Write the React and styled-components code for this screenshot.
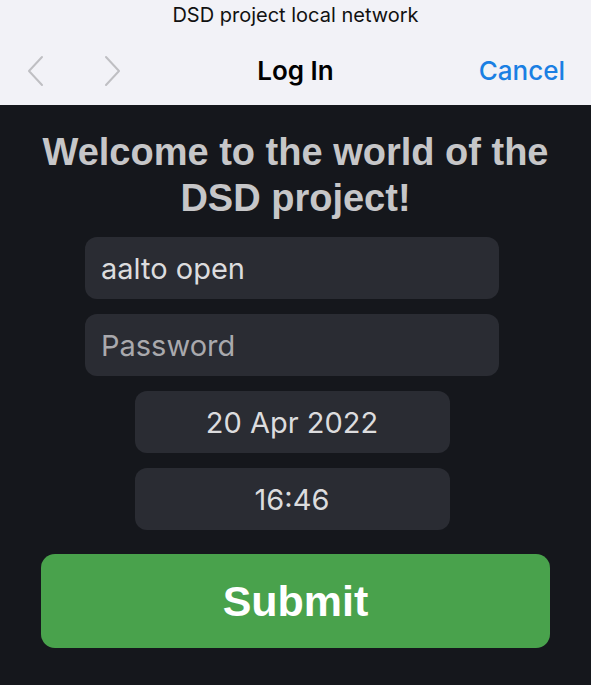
import React from "react";
import styled, { createGlobalStyle } from "styled-components";

const GlobalStyle = createGlobalStyle`
  html, body {
    margin: 0;
    padding: 0;
    background: #15171c;
  }
  * {
    box-sizing: border-box;
  }
`;

const Page = styled.div`
  width: 591px;
  height: 685px;
  display: flex;
  flex-direction: column;
  background: #15171c;
  overflow: hidden;
`;

const Header = styled.div`
  height: 105px;
  background: #f2f2f7;
  display: flex;
  flex-direction: column;
  font-family: Inter, "Liberation Sans", sans-serif;
`;

const NetworkName = styled.div`
  height: 32px;
  padding-top: 3px;
  text-align: center;
  font-size: 20px;
  color: #111;
`;

const NavRow = styled.div`
  flex: 1;
  display: grid;
  grid-template-columns: 1fr auto 1fr;
  align-items: center;
  padding: 4px 26px 0 26px;
`;

const Arrows = styled.div`
  display: flex;
  align-items: center;
  gap: 58px;
`;

const NavTitle = styled.div`
  font-size: 26px;
  font-weight: 600;
  color: #000;
`;

const CancelLink = styled.div`
  justify-self: end;
  font-size: 26px;
  font-weight: 500;
  color: #1a7fe3;
`;

const Main = styled.div`
  flex: 1;
  display: flex;
  flex-direction: column;
  align-items: center;
  padding-top: 24px;
`;

const Title = styled.h1`
  margin: 0 0 16px;
  text-align: center;
  font-family: "Liberation Sans", Arial, sans-serif;
  font-weight: 700;
  font-size: 38px;
  line-height: 46px;
  color: #c6c6c8;
`;

const Fields = styled.div`
  display: flex;
  flex-direction: column;
  align-items: center;
  gap: 15px;
  padding-right: 7px;
`;

const Field = styled.input`
  width: ${(p) => p.$width}px;
  height: 62px;
  border: none;
  outline: none;
  border-radius: 12px;
  background: #2a2c33;
  color: #dcdcde;
  font-family: Inter, "Liberation Sans", sans-serif;
  font-size: 29px;
  padding: 0 16px;
  text-align: ${(p) => (p.$center ? "center" : "left")};

  &::placeholder {
    color: #a9a9ad;
  }
`;

const SubmitButton = styled.button`
  margin-top: 24px;
  width: 509px;
  height: 94px;
  border: none;
  border-radius: 14px;
  background: #49a24c;
  color: #fff;
  font-family: "Liberation Sans", Arial, sans-serif;
  font-weight: 700;
  font-size: 43px;
`;

function Chevron({ dir }) {
  const d = dir === "left" ? "M16 2 L3 16 L16 30" : "M3 2 L16 16 L3 30";
  return (
    <svg width="19" height="32" viewBox="0 0 19 32">
      <path d={d} fill="none" stroke="#bfbfc3" strokeWidth="2" strokeLinecap="round" strokeLinejoin="round" />
    </svg>
  );
}

export default function App() {
  return (
    <>
      <GlobalStyle />
      <Page>
        <Header>
          <NetworkName>DSD project local network</NetworkName>
          <NavRow>
            <Arrows>
              <Chevron dir="left" />
              <Chevron dir="right" />
            </Arrows>
            <NavTitle>Log In</NavTitle>
            <CancelLink>Cancel</CancelLink>
          </NavRow>
        </Header>
        <Main>
          <Title>
            Welcome to the world of the
            <br />
            DSD project!
          </Title>
          <Fields>
            <Field $width={414} defaultValue="aalto open" />
            <Field $width={414} type="password" placeholder="Password" />
            <Field $width={315} $center defaultValue="20 Apr 2022" readOnly />
            <Field $width={315} $center defaultValue="16:46" readOnly />
          </Fields>
          <SubmitButton>Submit</SubmitButton>
        </Main>
      </Page>
    </>
  );
}
